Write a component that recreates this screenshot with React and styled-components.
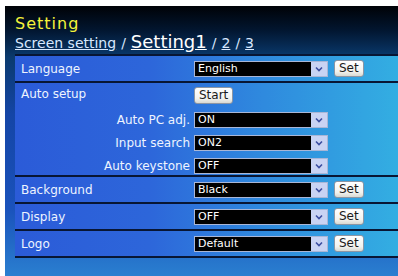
import { Fragment } from 'react'
import styled, { createGlobalStyle } from 'styled-components'

const GlobalStyle = createGlobalStyle`
  html, body {
    margin: 0;
    padding: 0;
    background: #ffffff;
  }
  body {
    padding: 6px 0 0 5px;
    font-family: "DejaVu Sans", Verdana, sans-serif;
  }
`

const Page = styled.div`
  width: 393px;
  height: 270px;
  box-sizing: border-box;
  padding: 0 0 0 10px;
  background: linear-gradient(180deg, #000206 0%, #021630 9%, #0a3a6e 19%, #1445a6 40%, #1a52bb 75%, #2a7fd0 100%);
  overflow: hidden;
`

const Title = styled.div`
  color: #f4f43a;
  font-size: 16px;
  letter-spacing: 1px;
  line-height: 16px;
  padding-top: 10px;
`

const Crumbs = styled.div`
  display: flex;
  align-items: baseline;
  gap: 5px;
  color: #d8e8ff;
  font-size: 14px;
  line-height: 20px;
  height: 22px;
  box-sizing: border-box;
`

const CrumbLink = styled.span`
  text-decoration: underline;
  font-size: ${(p) => (p.$current ? '18px' : '14px')};
  color: ${(p) => (p.$current ? '#ffffff' : '#d8e8ff')};
`

const Table = styled.div`
  border-top: 2px solid #081634;
`

const Row = styled.div`
  display: grid;
  grid-template-columns: 179px 1fr;
  align-items: ${(p) => (p.$top ? 'start' : 'center')};
  height: ${(p) => p.$h || 27}px;
  box-sizing: border-box;
  border-bottom: 2px solid #081634;
  background: linear-gradient(90deg, #2b5bd8 0%, #2d66da 35%, #2f8ade 65%, #33aee2 100%);
  padding-top: ${(p) => (p.$top ? 4 : 0)}px;
`

const Label = styled.div`
  color: #eef4ff;
  font-size: 12px;
  padding: 0 4px 0 6px;
  text-align: ${(p) => (p.$right ? 'right' : 'left')};
`

const Controls = styled.div`
  display: flex;
  align-items: center;
  gap: 6px;
`

const SubGrid = styled.div`
  grid-column: 1 / span 2;
  display: grid;
  grid-template-columns: 179px 1fr;
  row-gap: 7px;
  align-items: center;
  margin-top: 6px;
`

const SelectBox = styled.div`
  width: 134px;
  height: 16px;
  box-sizing: border-box;
  border: 1px solid #a9b6d6;
  background: #000;
  display: flex;
  align-items: stretch;
`

const SelectText = styled.div`
  flex: 1;
  color: #fff;
  font-size: 11px;
  line-height: 14px;
  padding-left: 3px;
`

const Arrow = styled.div`
  width: 16px;
  background: #c9d3f3;
  display: flex;
  align-items: center;
  justify-content: center;
`

const Button = styled.div`
  height: 17px;
  box-sizing: border-box;
  padding: 0 4px;
  border: 1px solid #8d96a4;
  border-radius: 3px;
  background: linear-gradient(180deg, #ffffff 0%, #f2f2ee 70%, #d9d9d2 100%);
  color: #1a1a1a;
  font-size: 12px;
  line-height: 15px;
`

const Select = ({ value }) => (
  <SelectBox>
    <SelectText>{value}</SelectText>
    <Arrow>
      <svg width="8" height="6" viewBox="0 0 8 6">
        <path d="M1 1.5 L4 4.5 L7 1.5" stroke="#3c4ea0" strokeWidth="1.6" fill="none" />
      </svg>
    </Arrow>
  </SelectBox>
)

const SimpleRow = ({ label, value }) => (
  <Row>
    <Label>{label}</Label>
    <Controls>
      <Select value={value} />
      <Button>Set</Button>
    </Controls>
  </Row>
)

const autoItems = [
  ['Auto PC adj.', 'ON'],
  ['Input search', 'ON2'],
  ['Auto keystone', 'OFF'],
]

export default function App() {
  return (
    <>
      <GlobalStyle />
      <Page>
        <Title>Setting</Title>
        <Crumbs>
          <CrumbLink>Screen setting</CrumbLink>
          <span>/</span>
          <CrumbLink $current>Setting1</CrumbLink>
          <span>/</span>
          <CrumbLink>2</CrumbLink>
          <span>/</span>
          <CrumbLink>3</CrumbLink>
        </Crumbs>
        <Table>
          <SimpleRow label="Language" value="English" />
          <Row $top $h={94}>
            <Label>Auto setup</Label>
            <Controls>
              <Button>Start</Button>
            </Controls>
            <SubGrid>
              {autoItems.map(([l, v]) => (
                <Fragment key={l}>
                  <Label $right>{l}</Label>
                  <Controls>
                    <Select value={v} />
                  </Controls>
                </Fragment>
              ))}
            </SubGrid>
          </Row>
          <SimpleRow label="Background" value="Black" />
          <SimpleRow label="Display" value="OFF" />
          <SimpleRow label="Logo" value="Default" />
        </Table>
      </Page>
    </>
  )
}
